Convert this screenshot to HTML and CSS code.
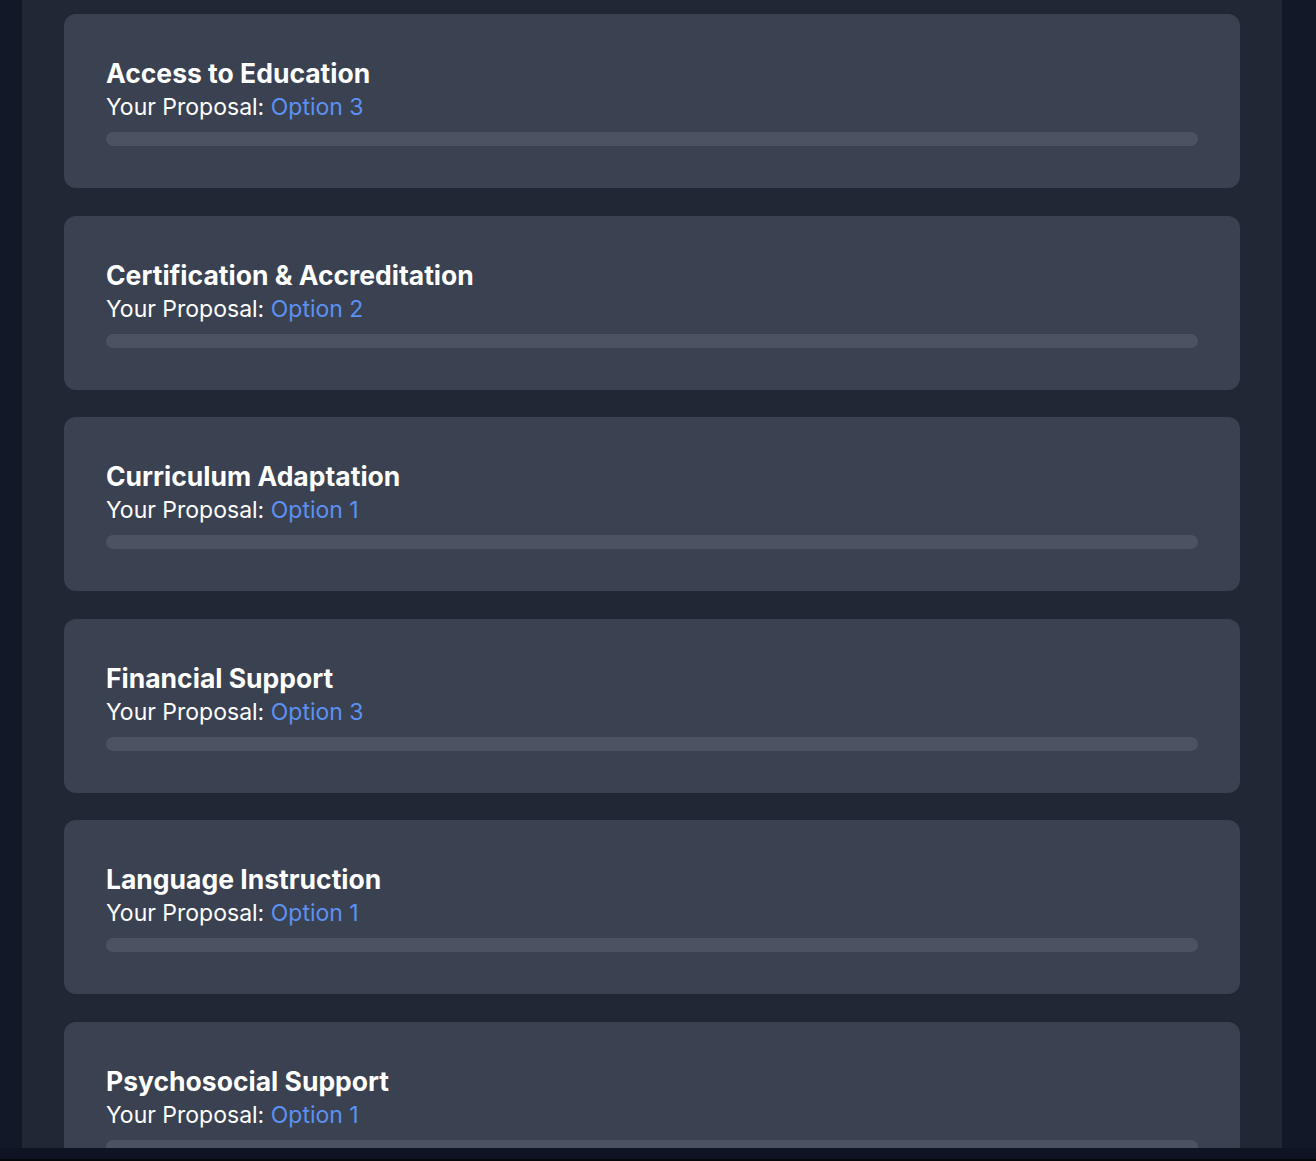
FILE: index.html
```html
<!DOCTYPE html>
<html lang="en">
<head>
<meta charset="utf-8">
<title>Proposals</title>
<link rel="stylesheet" href="styles.css">
</head>
<body>
<div class="page">
  <main class="panel">
    <section class="card">
      <h2 class="card-title">Access to Education</h2>
      <p class="card-sub">Your Proposal: <span class="opt">Option 3</span></p>
      <div class="bar"></div>
    </section>
    <section class="card">
      <h2 class="card-title">Certification &amp; Accreditation</h2>
      <p class="card-sub">Your Proposal: <span class="opt">Option 2</span></p>
      <div class="bar"></div>
    </section>
    <section class="card">
      <h2 class="card-title">Curriculum Adaptation</h2>
      <p class="card-sub">Your Proposal: <span class="opt">Option 1</span></p>
      <div class="bar"></div>
    </section>
    <section class="card">
      <h2 class="card-title">Financial Support</h2>
      <p class="card-sub">Your Proposal: <span class="opt">Option 3</span></p>
      <div class="bar"></div>
    </section>
    <section class="card">
      <h2 class="card-title">Language Instruction</h2>
      <p class="card-sub">Your Proposal: <span class="opt">Option 1</span></p>
      <div class="bar"></div>
    </section>
    <section class="card">
      <h2 class="card-title">Psychosocial Support</h2>
      <p class="card-sub">Your Proposal: <span class="opt">Option 1</span></p>
      <div class="bar"></div>
    </section>
  </main>
  <div class="bottom-strip"></div>
</div>
</body>
</html>
```
FILE: styles.css
```css
html, body {
  margin: 0;
  padding: 0;
  background: #111827;
  height: 100%;
  overflow: hidden;
}
.page {
  display: flex;
  flex-direction: column;
  height: 1161px;
}
.panel {
  margin: 0 34px 0 22px;
  height: 1148px;
  box-sizing: border-box;
  background: #212735;
  padding: 14px 42px 0 42px;
  display: flex;
  flex-direction: column;
  gap: 27.5px;
  overflow: hidden;
  flex: none;
}
.bottom-strip {
  height: 11px;
  background: #0f1423;
  border-bottom: 2px solid #05070c;
  flex: none;
}
.card {
  flex: none;
  background: #3a4150;
  border-radius: 12px;
  padding: 42px 42px 42px 42px;
  height: 174px;
  box-sizing: border-box;
  display: flex;
  flex-direction: column;
  font-family: Inter, "Noto Sans", sans-serif;
}
.card-title {
  margin: 0;
  font-size: 26.5px;
  line-height: 34px;
  font-weight: 700;
  color: #ffffff;
}
.card-sub {
  margin: 0;
  font-size: 23px;
  line-height: 34px;
  color: #ffffff;
}
.opt {
  color: #5c91f2;
}
.bar {
  margin-top: 8px;
  height: 14px;
  border-radius: 7px;
  background: #4b5362;
}
```
